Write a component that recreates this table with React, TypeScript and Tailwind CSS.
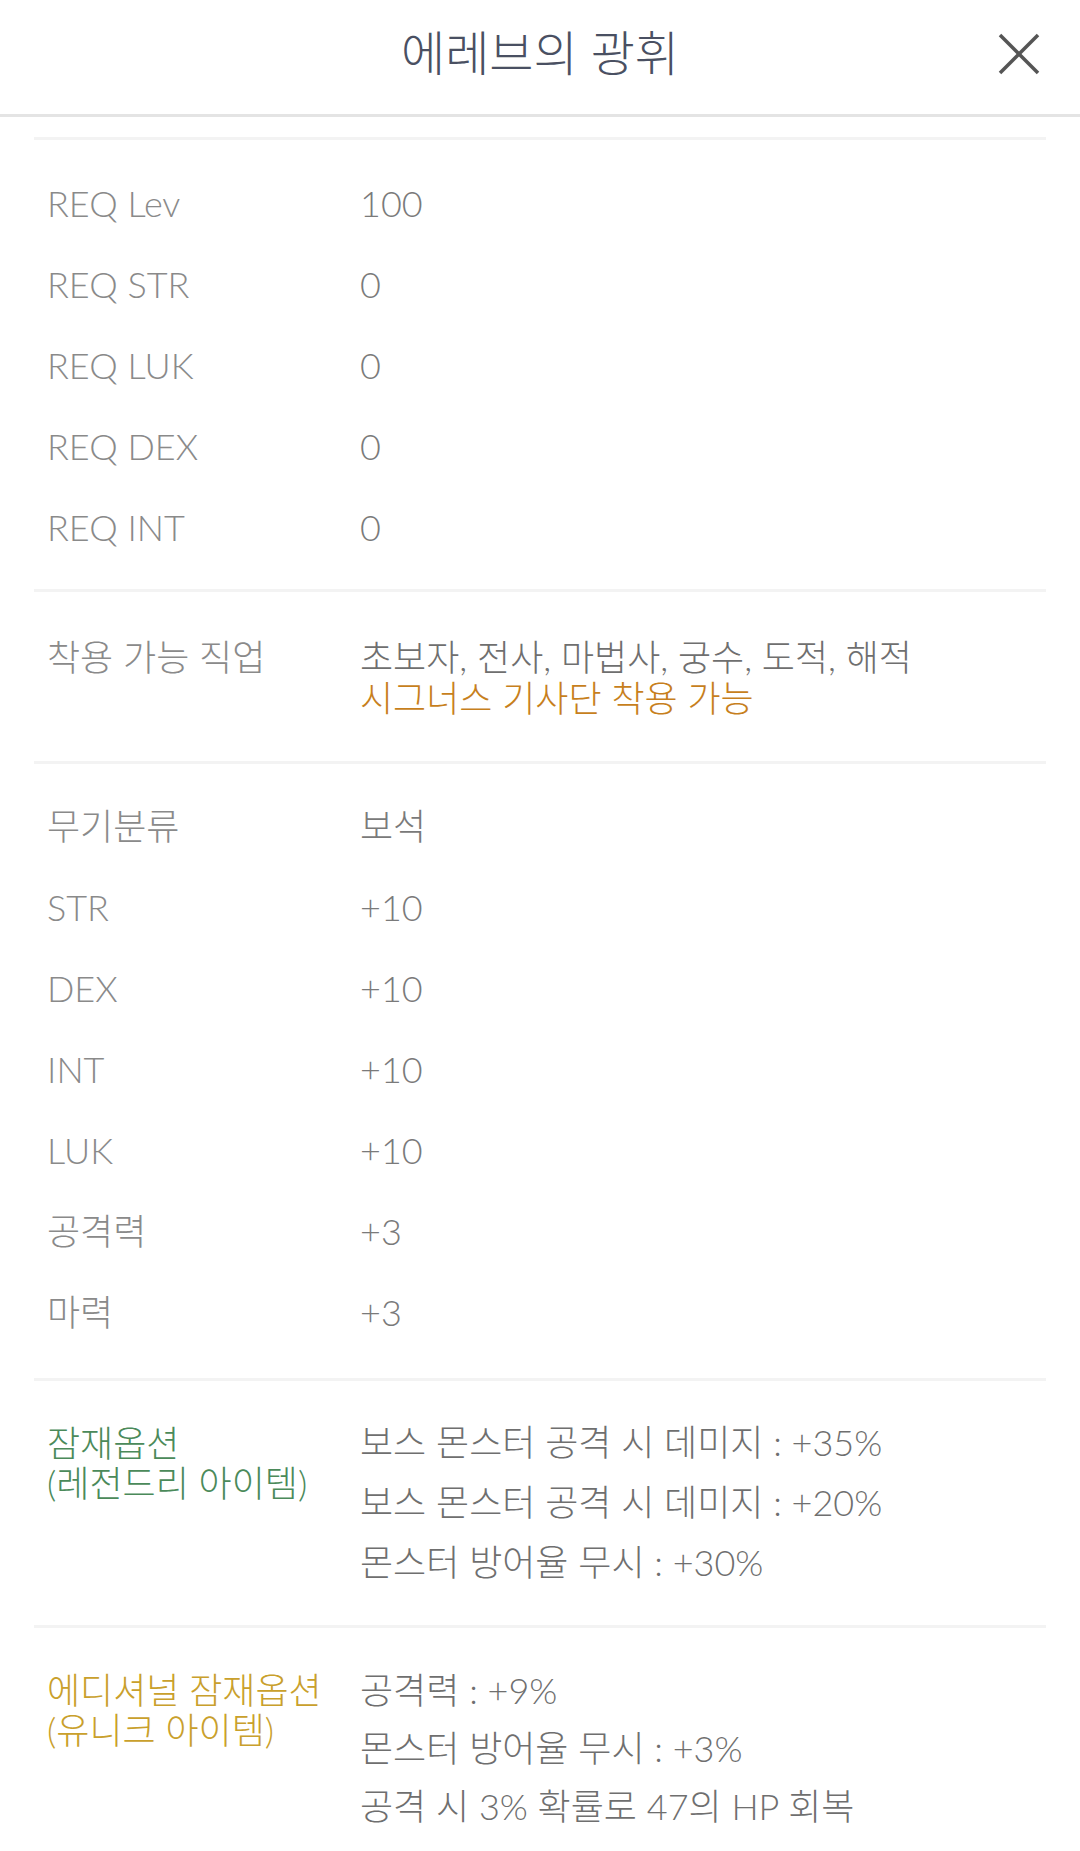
const font = { fontFamily: "Lato, 'Noto Sans CJK KR', sans-serif" };

const reqRows = [
  ["REQ Lev", "100"],
  ["REQ STR", "0"],
  ["REQ LUK", "0"],
  ["REQ DEX", "0"],
  ["REQ INT", "0"],
];

const statRows = [
  ["무기분류", "보석"],
  ["STR", "+10"],
  ["DEX", "+10"],
  ["INT", "+10"],
  ["LUK", "+10"],
  ["공격력", "+3"],
  ["마력", "+3"],
];

function Divider() {
  return <div className="h-[3px] bg-[#f3f3f3]" />;
}

function Row({ label, value }: { label: string; value: string }) {
  return (
    <div className="flex items-center h-[81px] pl-[13px]">
      <div className="w-[313px] shrink-0 text-[#8a8a8a]">{label}</div>
      <div className="text-[#7a7a7a]">{value}</div>
    </div>
  );
}

export default function App() {
  return (
    <div className="min-h-screen bg-white font-light" style={font}>
      {/* Header */}
      <header className="relative h-[117px] flex items-center justify-center border-b-[3px] border-[#e4e4e4]">
        <h1 className="text-[48px] text-[#4a5062] font-light pb-[8px]">에레브의 광휘</h1>
        <button className="absolute right-[40px] top-[33px] text-[#555]">
          <svg width="42" height="42" viewBox="0 0 42 42" fill="none" stroke="currentColor" strokeWidth="3.6">
            <line x1="2" y1="2" x2="40" y2="40" />
            <line x1="40" y1="2" x2="2" y2="40" />
          </svg>
        </button>
      </header>

      <div className="px-[34px] pt-[20px] text-[36px]">
        <Divider />

        {/* Requirements */}
        <div className="py-[22px]">
          {reqRows.map(([l, v]) => (
            <Row key={l} label={l} value={v} />
          ))}
        </div>

        <Divider />

        {/* Jobs */}
        <div className="flex pl-[13px] pt-[45px] pb-[42px] leading-[41px]">
          <div className="w-[313px] shrink-0 text-[#8a8a8a]">착용 가능 직업</div>
          <div>
            <div className="text-[#6f6f6f]">초보자, 전사, 마법사, 궁수, 도적, 해적</div>
            <div className="text-[#c77f1d]">시그너스 기사단 착용 가능</div>
          </div>
        </div>

        <Divider />

        {/* Stats */}
        <div className="pt-[21px] pb-[26px]">
          {statRows.map(([l, v]) => (
            <Row key={l} label={l} value={v} />
          ))}
        </div>

        <Divider />

        {/* Potential */}
        <div className="flex pl-[13px] pt-[31px] pb-[33px]">
          <div className="w-[313px] shrink-0 text-[#4b8a5a] leading-[40px] pt-[11px]">
            <div>잠재옵션</div>
            <div>(레전드리 아이템)</div>
          </div>
          <div className="text-[#6f6f6f] leading-[60px]">
            <div>보스 몬스터 공격 시 데미지 : +35%</div>
            <div>보스 몬스터 공격 시 데미지 : +20%</div>
            <div>몬스터 방어율 무시 : +30%</div>
          </div>
        </div>

        <Divider />

        {/* Additional potential */}
        <div className="flex pl-[13px] pt-[33px] pb-[20px]">
          <div className="w-[313px] shrink-0 text-[#c9a02c] leading-[40px] pt-[9px]">
            <div>에디셔널 잠재옵션</div>
            <div>(유니크 아이템)</div>
          </div>
          <div className="text-[#6f6f6f] leading-[58px]">
            <div>공격력 : +9%</div>
            <div>몬스터 방어율 무시 : +3%</div>
            <div>공격 시 3% 확률로 47의 HP 회복</div>
          </div>
        </div>
      </div>
    </div>
  );
}
